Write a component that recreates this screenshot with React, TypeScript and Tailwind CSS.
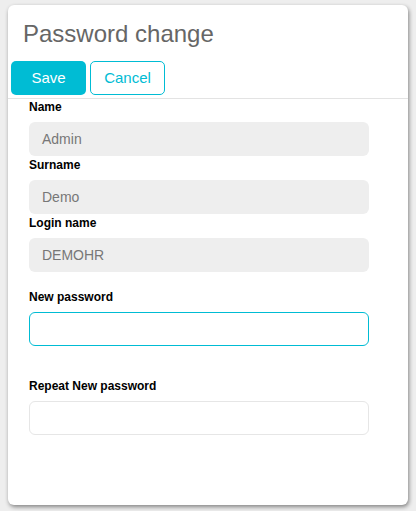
import React from "react";

const font = { fontFamily: '"Liberation Sans", Arial, sans-serif' };

function Field({
  label,
  value,
  className = "",
  inputClass = "",
}: {
  label: string;
  value?: string;
  className?: string;
  inputClass?: string;
}) {
  return (
    <div className={className}>
      <div className="h-[14px] text-[12px] font-bold leading-[14px] text-black">
        {label}
      </div>
      <div
        className={
          "mt-[8px] flex h-[34px] w-[340px] items-center rounded-[6px] px-[13px] text-[14px] text-[#777] " +
          inputClass
        }
      >
        {value}
      </div>
    </div>
  );
}

export default function App() {
  return (
    <div className="h-[511px] w-[416px] bg-[#eeeeee] pl-[8px] pt-[5px]" style={font}>
      <div className="h-[500px] w-[400px] rounded-[6px] bg-white shadow-[1px_2px_4px_rgba(0,0,0,0.45)]">
        <div className="pl-[15px] pt-[15px] text-[24px] leading-[28px] text-[#666]">
          Password change
        </div>
        <div className="mt-[13px] flex gap-[4px] border-b border-[#e3e3e3] pb-[3px] pl-[3px]">
          <button className="h-[34px] w-[75px] rounded-[5px] bg-[#00bcd4] text-[15px] text-white">
            Save
          </button>
          <button className="h-[34px] w-[75px] rounded-[5px] border border-[#00bcd4] bg-white text-[15px] text-[#00bcd4]">
            Cancel
          </button>
        </div>
        <div className="pl-[21px] pt-[1px]">
          <Field label="Name" value="Admin" inputClass="bg-[#eeeeee]" />
          <Field
            label="Surname"
            value="Demo"
            className="mt-[2px]"
            inputClass="bg-[#eeeeee]"
          />
          <Field
            label="Login name"
            value="DEMOHR"
            className="mt-[2px]"
            inputClass="bg-[#eeeeee]"
          />
          <Field
            label="New password"
            className="mt-[18px]"
            inputClass="border border-[#00bcd4] bg-white"
          />
          <Field
            label="Repeat New password"
            className="mt-[33px]"
            inputClass="border border-[#e6e6e6] bg-white"
          />
        </div>
      </div>
    </div>
  );
}
